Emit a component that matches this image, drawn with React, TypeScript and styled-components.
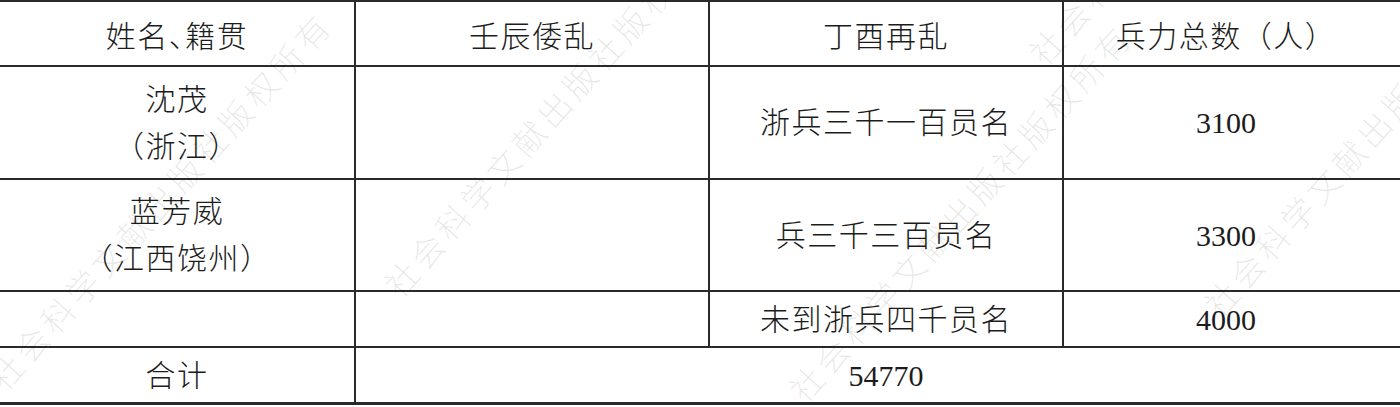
import React from "react";
import styled, { createGlobalStyle } from "styled-components";

const Global = createGlobalStyle`
  html, body {
    margin: 0;
    padding: 0;
    background: #ffffff;
    overflow: hidden;
  }
`;

const Page = styled.div`
  position: relative;
  width: 1400px;
  height: 407px;
  overflow: hidden;
  background: #ffffff;
`;

const Grid = styled.div`
  display: grid;
  width: 1416px;
  grid-template-columns: 354px 352px 352px 352px;
  grid-template-rows: 63px 111px 110px 54px 54px;
  column-gap: 2px;
  row-gap: 2px;
  padding-top: 2px;
  padding-bottom: 3px;
  background: #2a2a2a;
  font-family: "Liberation Serif", "Noto Sans CJK SC", serif;
  font-weight: 300;
  font-size: 30px;
  color: #1c1c1c;
`;

const Cell = styled.div<{
  $span?: number;
  $halt?: boolean;
  $num?: boolean;
  $head?: boolean;
  $last?: boolean;
}>`
  background: #ffffff;
  display: flex;
  flex-direction: column;
  align-items: center;
  justify-content: center;
  text-align: center;
  line-height: 47px;
  letter-spacing: ${(p) => (p.$num ? "0" : "1.5px")};
  font-weight: ${(p) => (p.$num ? 400 : 300)};
  grid-column: ${(p) => (p.$span ? `span ${p.$span}` : "auto")};
  font-feature-settings: ${(p) => (p.$halt ? '"halt" 1' : "normal")};
  padding-top: ${(p) => (p.$head ? "5px" : "0")};
  padding-right: ${(p) => (p.$last ? "28px" : "0")};
`;

const Line = styled.span`
  display: block;
  white-space: nowrap;
`;

const Overlay = styled.div`
  position: absolute;
  inset: 0;
  pointer-events: none;
`;

const Mark = styled.div<{ $x: number; $y: number }>`
  position: absolute;
  left: ${(p) => p.$x}px;
  top: ${(p) => p.$y}px;
  transform: translate(-50%, -50%) rotate(-48deg);
  white-space: nowrap;
  font-family: "Noto Sans CJK SC", sans-serif;
  font-weight: 300;
  font-size: 33px;
  letter-spacing: 5px;
  color: rgba(0, 0, 0, 0.09);
`;

const marks = [
  { x: 160, y: 200 },
  { x: 555, y: 107 },
  { x: 960, y: 212 },
  { x: 1375, y: 127 },
  { x: 1200, y: -125 },
];

const WM = "社会科学文献出版社版权所有";

export default function App() {
  return (
    <Page>
      <Global />
      <Grid>
        <Cell $halt $head>姓名、籍贯</Cell>
        <Cell $head>壬辰倭乱</Cell>
        <Cell $head>丁酉再乱</Cell>
        <Cell $head $last>兵力总数（人）</Cell>

        <Cell $halt>
          <Line>沈茂</Line>
          <Line>（浙江）</Line>
        </Cell>
        <Cell />
        <Cell>浙兵三千一百员名</Cell>
        <Cell $num $last>3100</Cell>

        <Cell $halt>
          <Line>蓝芳威</Line>
          <Line>（江西饶州）</Line>
        </Cell>
        <Cell />
        <Cell>兵三千三百员名</Cell>
        <Cell $num $last>3300</Cell>

        <Cell />
        <Cell />
        <Cell>未到浙兵四千员名</Cell>
        <Cell $num $last>4000</Cell>

        <Cell>合计</Cell>
        <Cell $num $span={3}>54770</Cell>
      </Grid>
      <Overlay>
        {marks.map((m, i) => (
          <Mark key={i} $x={m.x} $y={m.y}>
            {WM}
          </Mark>
        ))}
      </Overlay>
    </Page>
  );
}
